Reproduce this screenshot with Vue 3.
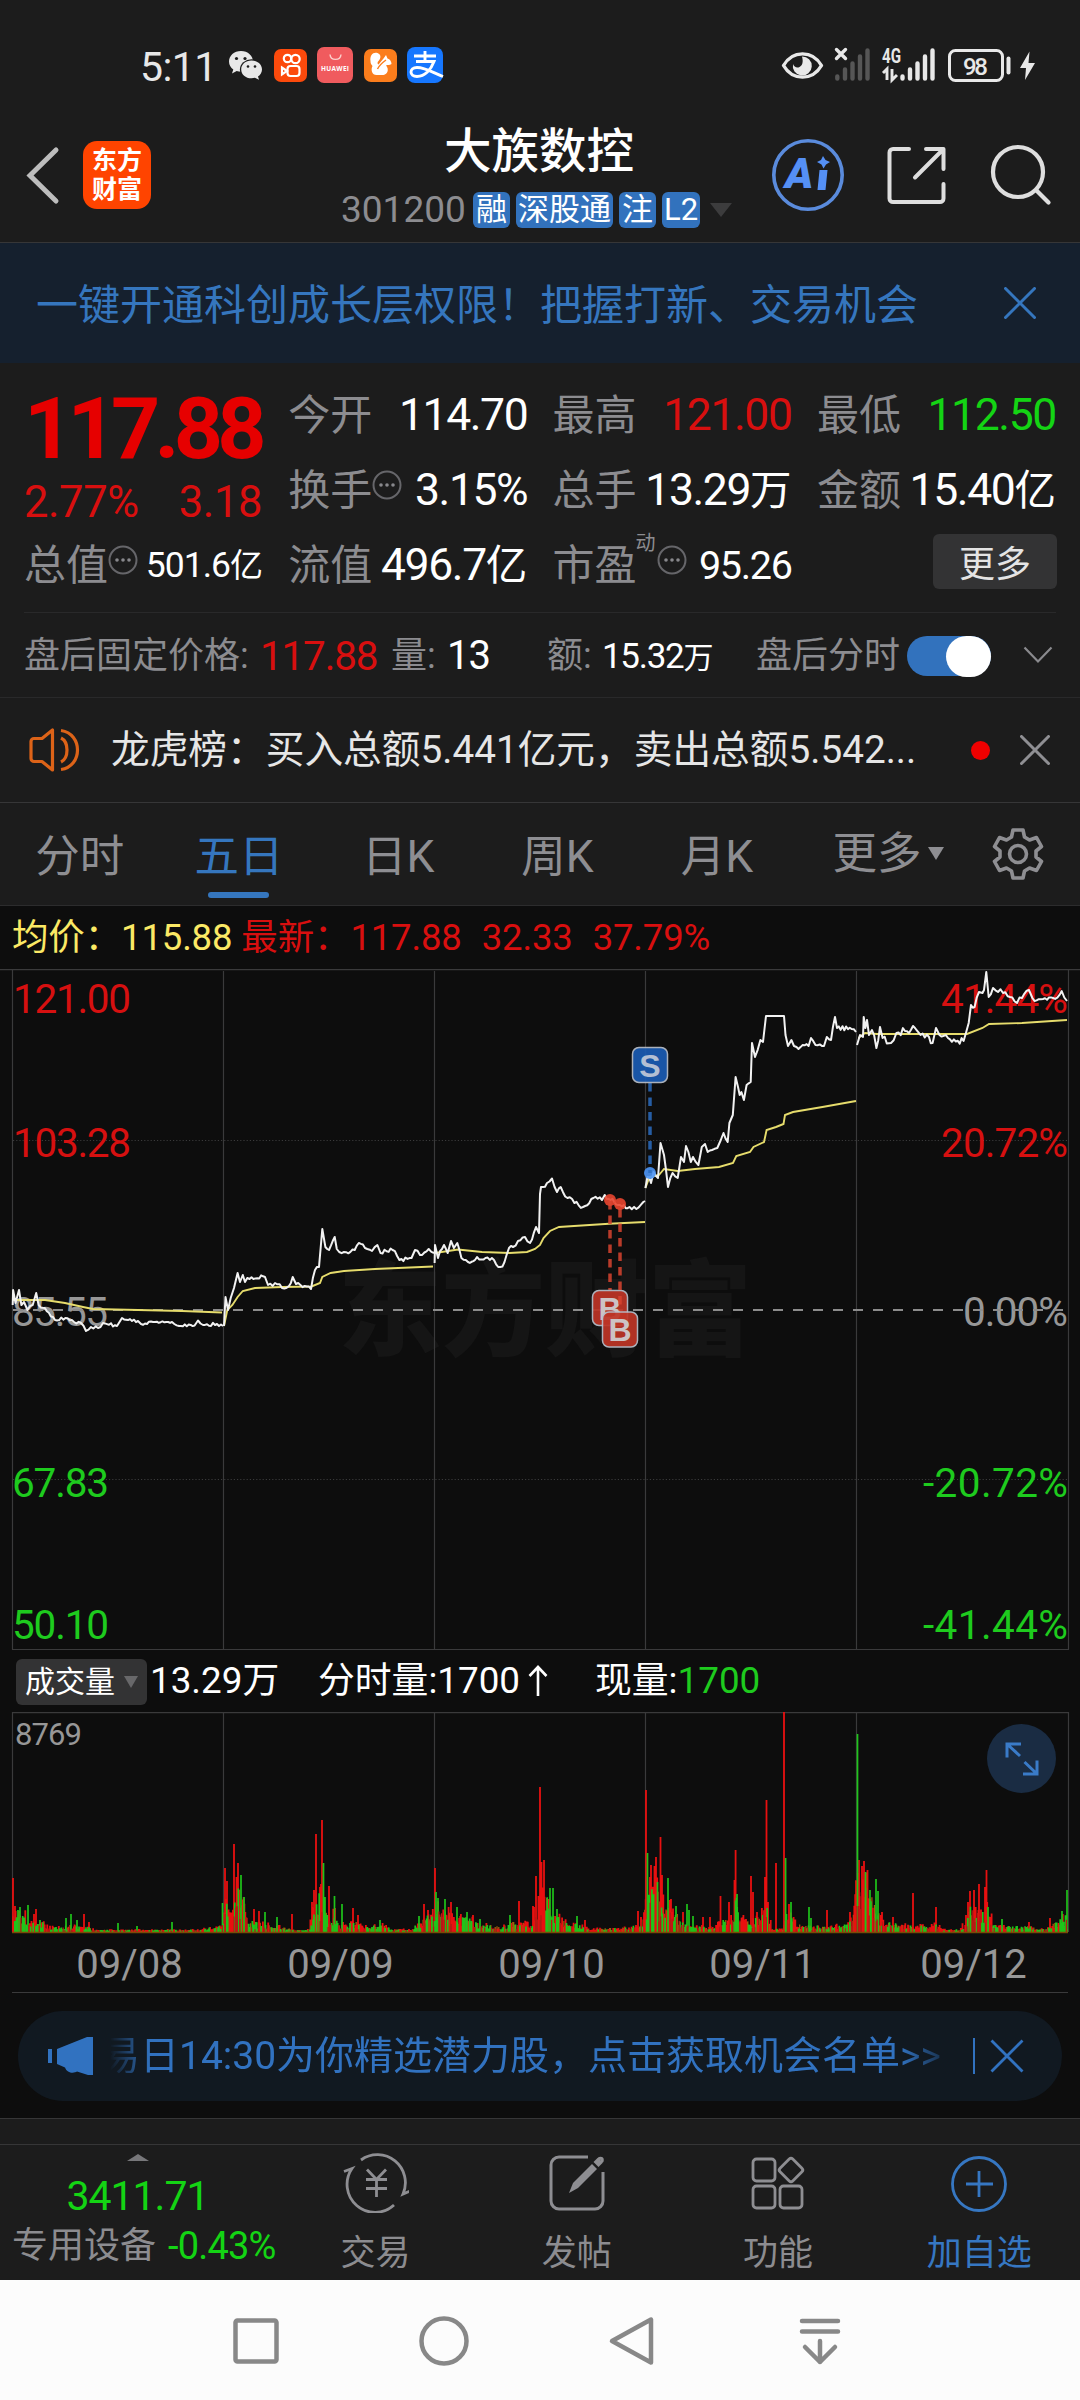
<template>
  <div class="stock-page">
    <!-- Status Bar -->
    <div class="status-bar">
      <div class="status-left">
        <span class="clock">5:11</span>
        <svg class="app-icons" width="215" height="38" viewBox="229 46 215 38">
          <g fill="#e8e8e8">
            <path d="M241 51c-7 0-12 4.700-12 10.500 0 3.300 1.700 6.200 4.300 8l-1.300 4 4.700-2.400c1.300.4 2.800.6 4.300.6 7 0 12-4.700 12-10.200S248 51 241 51z" />
            <ellipse cx="251.500" cy="69.500" rx="11.600" ry="10.200" fill="#1c1c1c" />
            <path d="M251.500 60.500c-6 0-10.300 4-10.300 8.900s4.300 8.900 10.300 8.900c1.200 0 2.400-.2 3.400-.5l4.100 2-1-3.400c2.400-1.600 4-4.100 4-7 0-4.900-4.500-8.900-10.500-8.900z" />
          </g>
          <g fill="#1c1c1c">
            <circle cx="236.500" cy="58.500" r="1.600" /><circle cx="245" cy="58.500" r="1.600" />
            <circle cx="248" cy="66.500" r="1.300" /><circle cx="255" cy="66.500" r="1.300" />
          </g>
          <rect x="274" y="49" width="33" height="33" rx="7" fill="#fc4a0c" />
          <g fill="none" stroke="#fff" stroke-width="2.200">
            <circle cx="287.500" cy="58.500" r="3.700" /><circle cx="295.500" cy="59" r="4.200" />
            <rect x="287.500" y="66" width="12" height="10" rx="3" />
            <path d="M287 71l-5-3.500v7z" />
          </g>
          <rect x="317" y="47" width="36" height="36" rx="7" fill="#f05b5e" />
          <path d="M330 54.500c.5 6.500 10.500 6.500 11 0" fill="none" stroke="#fbd0cc" stroke-width="1.400" />
          <text x="335" y="71" class="huawei" text-anchor="middle" textLength="28">HUAWEI</text>
          <rect x="364" y="49" width="33" height="33" rx="7" fill="#fb7d1c" />
          <path d="M370.500 61c-1-6 3-9.500 7-8 4 1.500 3.500 5.500 1 8-1.500 1.500-1 3 0 3.500l5-6 2.500-3.500 1.500 3.500c2.500.5 4 3 4 5.500-2 1.500-4 .5-5.500 1.500 3.500 4 1.500 9-2.500 9.500h-7c-4.500 0-6-5-4-9-1.500-1.500-2-3-2-5z" fill="#fff" />
          <path d="M377.500 69c2-4 5-6.500 8.500-9M391.500 66v4M388.500 74v3" stroke="#fb7d1c" stroke-width="1.500" fill="none" />
          <rect x="407" y="47" width="36" height="36" rx="8" fill="#1677ff" />
          <path d="M414 56h22M425 51v10M416 61.500h18c-3 8-9 15-17 15-8 0-8-9 0-9 8 0 16 5 26 9" fill="none" stroke="#fff" stroke-width="2.900" />
        </svg>
      </div>
      <svg class="status-right" width="258" height="38" viewBox="780 46 258 38">
        <path d="M783.500 65.500c9-15.500 29-15.500 38 0-9 15.500-29 15.500-38 0z" fill="none" stroke="#e8e8e8" stroke-width="3.400" stroke-linejoin="round" />
        <path d="M802 56.500a9.500 9.500 0 1 1-9 7.500c1 3 4 4.500 6.500 3 3-1.500 4-5 2.500-10.500z" fill="#e8e8e8" />
        <path d="M836.500 49.500l9 9m0-9l-9 9" stroke="#e8e8e8" stroke-width="3.400" stroke-linecap="round" />
        <g stroke="#565656" stroke-width="4.400" stroke-linecap="round">
          <path d="M837.300 76.500v2M845 69.500v9M852.500 63.500v15M860 56.500v22M867.500 50.500v28" />
        </g>
        <text x="882" y="62.500" class="net-type" textLength="19" lengthAdjust="spacingAndGlyphs">4G</text>
        <path d="M883 73l4-4v11M892 69v11l5-5" fill="none" stroke="#e8e8e8" stroke-width="2.900" />
        <g stroke="#e8e8e8" stroke-width="4.400" stroke-linecap="round">
          <path d="M902.500 76.500v2M910 69.500v9M917.500 63.500v15M925 56.500v22M932.500 50.500v28" />
        </g>
        <rect x="949.500" y="50.500" width="53" height="30" rx="6" fill="none" stroke="#e8e8e8" stroke-width="3" />
        <path d="M1008.500 58.500v14" stroke="#e8e8e8" stroke-width="4" stroke-linecap="round" />
        <text x="975.500" y="74.500" class="battery" text-anchor="middle" textLength="25">98</text>
        <path d="M1029.500 51.500l-9.500 16.500h6l-1 12 10-17h-6.500z" fill="#e8e8e8" />
      </svg>
    </div>

    <!-- Header -->
    <header class="header">
      <svg class="back" width="36" height="60" viewBox="0 0 36 60" fill="none" stroke="#bdbdbd" stroke-width="5" stroke-linecap="round">
        <path d="M31 5L5 30.500 31 56" stroke-linejoin="miter" />
      </svg>
      <div class="brand"><span>东方</span><span>财富</span></div>
      <div class="title-block">
        <h1 class="stock-name">大族数控</h1>
        <div class="stock-meta">
          <span class="stock-code">301200</span>
          <span v-for="tag in tags" :key="tag" class="tag">{{ tag }}</span>
          <i class="meta-caret"></i>
        </div>
      </div>
      <svg class="ai" width="74" height="74" viewBox="0 0 74 74">
        <circle cx="37" cy="37" r="34.200" fill="none" stroke="#5a8bdc" stroke-width="3.600" />
        <text x="14" y="50" class="ai-text">A</text>
        <path d="M48.500 32h8l-2 20h-8zM52 18l2.500 4 4.500 2-4 2.500-2.500 4-2-4-4.500-2.500 4-2z" fill="#5590f5" />
      </svg>
      <svg class="share" width="60" height="60" viewBox="0 0 60 60" fill="none" stroke="#dedede" stroke-width="4" stroke-linecap="round" stroke-linejoin="round">
        <path d="M22 3H6a3.500 3.500 0 0 0-3.500 3.500v46A3.500 3.500 0 0 0 6 56h47a3.500 3.500 0 0 0 3.500-3.500V38M39 3h17.500v20M56 3.500L28 31.500" />
      </svg>
      <svg class="search" width="62" height="62" viewBox="0 0 62 62" fill="none" stroke="#dedede" stroke-width="4.200" stroke-linecap="round">
        <circle cx="28" cy="28" r="25" /><path d="M46.500 46.500l12 12" />
      </svg>
    </header>

    <!-- Promo -->
    <div class="promo">
      <span>一键开通科创成长层权限！把握打新、交易机会</span>
      <svg width="32" height="32" viewBox="0 0 32 32" stroke="#3576be" stroke-width="3" stroke-linecap="round"><path d="M1.500 1.500l29 29m0-29l-29 29" /></svg>
    </div>

    <!-- Quote -->
    <section class="quote">
      <div class="price-block">
        <div class="price">117.88</div>
        <div class="change"><span>2.77%</span><span>3.18</span></div>
      </div>
      <div v-for="q in quotes" :key="q.label" class="cell">
        <span class="label">{{ q.label }}<sup v-if="q.sup">{{ q.sup }}</sup></span>
        <svg v-if="q.info" class="info" :class="{ shifted: q.sup }" width="30" height="30" viewBox="0 0 30 30">
          <circle cx="15" cy="15" r="13.500" fill="none" stroke="#66666a" stroke-width="2" />
          <g fill="#88888c"><circle cx="9" cy="15" r="1.800" /><circle cx="15" cy="15" r="1.800" /><circle cx="21" cy="15" r="1.800" /></g>
        </svg>
        <span class="value" :class="[q.tone, q.size]">{{ q.value }}<b v-if="q.unit">{{ q.unit }}</b></span>
      </div>
      <button class="more-btn">更多</button>
    </section>

    <!-- After Hours -->
    <div class="after-hours">
      <span class="ah-price-label">盘后固定价格:</span>
      <span class="ah-price">117.88</span>
      <span class="ah-vol-label">量:</span>
      <span class="ah-vol">13</span>
      <span class="ah-amt-label">额:</span>
      <span class="ah-amt">15.32<b>万</b></span>
      <span class="ah-toggle-label">盘后分时</span>
      <span class="toggle"><i></i></span>
      <svg width="30" height="18" viewBox="0 0 30 18" fill="none" stroke="#8a8a8e" stroke-width="2.200"><path d="M1.500 1.500L15 15.500 28.500 1.500" /></svg>
    </div>

    <!-- News -->
    <div class="news">
      <svg width="52" height="44" viewBox="0 0 52 44" fill="none" stroke="#dd6318" stroke-width="3.200" stroke-linejoin="round">
        <path d="M2 13.500a3 3 0 0 1 3-3h8L23.500 2v40L13 33.500H5a3 3 0 0 1-3-3z" />
        <path d="M32 10c8 4 8 20 0 24M32 2.500c22 3 22 36 0 39" />
      </svg>
      <span class="news-text">龙虎榜：买入总额5.441亿元，卖出总额5.542...</span>
      <i class="dot"></i>
      <svg width="30" height="30" viewBox="0 0 30 30" stroke="#8f8f93" stroke-width="3" stroke-linecap="round"><path d="M1.500 1.500l27 27m0-27l-27 27" /></svg>
    </div>

    <!-- Period Tabs -->
    <nav class="tabs">
      <span v-for="tab in tabs" :key="tab" class="tab" :class="{ active: tab === '五日' }">{{ tab }}</span>
      <span class="tab tab-more">更多<i></i></span>
      <svg class="gear" width="54" height="54" viewBox="0 0 54 54" fill="none" stroke="#8e8e92" stroke-width="3.600" stroke-linejoin="round">
        <path d="M22 3h10l1.500 7 5 3 7-2.500 5 9-5.500 4.500v6l5.500 4.500-5 9-7-2.500-5 3L32 51H22l-1.500-7-5-3-7 2.500-5-9L9 30v-6l-5.500-4.500 5-9 7 2.500 5-3z" />
        <circle cx="27" cy="27" r="8.500" />
      </svg>
    </nav>

    <!-- Chart -->
    <div class="legend">
      <span class="avg">均价：115.88</span>
      <span>最新：117.88</span><span>32.33</span><span>37.79%</span>
    </div>
    <svg class="price-chart" width="1080" height="682" viewBox="0 0 1080 682">
      <text x="338" y="379" class="watermark" textLength="414">东方财富</text>
      <g stroke="#3a3a3b" stroke-width="1.200">
        <path d="M0 .6H1080M12.500 0V680.500M1068.500 0V680.500M12 680.500H1069" />
        <path d="M223.500 2V680M434.500 2V680M645.500 2V680M856.500 2V680" />
        <path d="M13 171.500H1068M13 510.500H1068" stroke-dasharray="1.200 2" />
      </g>
      <text v-for="a in axis" :key="a.text" :x="a.x" :y="a.y" class="axis-text" :class="a.tone" :textLength="a.w">{{ a.text }}</text>
      <path d="M13 341H1068" stroke="#8c8c8c" stroke-width="2" stroke-dasharray="10 10" />
      <polyline v-for="(line, i) in avgLines" :key="'a' + i" :points="toPoints(line)" fill="none" stroke="#e6dc6c" stroke-width="1.900" />
      <polyline v-for="(line, i) in priceLines" :key="'p' + i" :points="jitter(line, i)" fill="none" stroke="#f2f2f2" stroke-width="2" stroke-linejoin="round" />
      <g v-for="(m, i) in marks" :key="'m' + i" :class="m.kind">
        <circle :cx="m.x" :cy="m.dot" r="6" opacity=".9" />
        <path :d="m.line" stroke-width="3.500" stroke-dasharray="8.500 6" fill="none" opacity=".85" />
        <rect :x="m.x - 17.500" :y="m.box" width="35" height="35" rx="6.500" stroke="#b9bfca" stroke-width="1.500" opacity=".92" />
        <text :x="m.x" :y="m.box + 29" text-anchor="middle">{{ m.text }}</text>
      </g>
    </svg>

    <div class="vol-info">
      <span class="vol-pill">成交量<i></i></span>
      <span class="v1">13.29万</span>
      <span class="v2">分时量:1700<svg width="20" height="32" viewBox="0 0 20 32" fill="none" stroke="#fff" stroke-width="2.600"><path d="M10 31V2M1.500 11L10 2l8.500 9" /></svg></span>
      <span class="v3">现量:<em>1700</em></span>
    </div>
    <div class="volume">
      <svg width="1080" height="222" viewBox="0 0 1080 222">
        <path d="M12 .6H1069M12.500 0V220M1068.500 0V220M223.500 0V220M434.500 0V220M645.500 0V220M856.500 0V220" stroke="#3a3a3b" stroke-width="1.200" />
        <path :d="bars.base" stroke="#a35d0c" stroke-width="1.300" />
        <path :d="bars.red" stroke="#e81010" stroke-width="1.800" />
        <path :d="bars.green" stroke="#1fc41a" stroke-width="1.700" />
        <path :d="bars.front" stroke="#b51a14" stroke-width="1.300" />
        <path d="M12 220.500H1068" stroke="#7a4a08" stroke-width="1.500" />
        <text x="15" y="32.500" class="vol-max" textLength="67">8769</text>
      </svg>
      <button class="expand">
        <svg width="34" height="34" viewBox="0 0 34 34" fill="none" stroke="#3a7bc8" stroke-width="3">
          <path d="M2 15.500V2h14M2.500 2.500L15 14M32 18.500V32H18M31.500 31.500L19.500 20" />
        </svg>
      </button>
    </div>
    <div class="dates"><span v-for="d in dates" :key="d">{{ d }}</span></div>

    <!-- Notice -->
    <div class="notice-wrap">
      <div class="notice">
        <svg width="46" height="40" viewBox="0 0 46 40" fill="#3172c0"><path d="M0 13h4v14H0zM9 13L39 1h6v38h-5l-11-3.500c-3 2-10 2-12-4L9 28z" /></svg>
        <span class="notice-text"><span class="notice-scroll">易日14:30为你精选潜力股，点击获取机会名单&gt;&gt;</span></span>
        <i></i>
        <svg width="34" height="34" viewBox="0 0 34 34" stroke="#3172c0" stroke-width="2.800"><path d="M1.500 1.500l31 31m0-31l-31 31" /></svg>
      </div>
    </div>
    <div class="spacer"></div>

    <!-- Bottom Bar -->
    <footer class="bottom-bar">
      <div class="index">
        <i></i>
        <div class="index-value">3411.71</div>
        <div class="index-row"><span>专用设备</span><em>-0.43%</em></div>
      </div>
      <div class="action">
        <svg width="66" height="60" viewBox="0 0 66 60" fill="none" stroke="#8e8e92" stroke-width="2.800">
          <path d="M18 7a28 28 0 0 1 42 34l7-3M51 52A28 28 0 0 1 9 15.500l-8 3" />
          <path d="M24 16.500l9.500 10 9.500-10M33.500 26v18M23 26.500h21M23 35.500h21" />
        </svg>
        <span>交易</span>
      </div>
      <div class="action">
        <svg width="58" height="60" viewBox="0 0 58 60" fill="none" stroke="#8e8e92" stroke-width="3">
          <path d="M40 4H11a8 8 0 0 0-8 8v36a8 8 0 0 0 8 8h36a8 8 0 0 0 8-8V19" />
          <path d="M44 11l5 5-19 19-9 5 4-10z" fill="#8e8e92" stroke="none" />
          <path d="M48 11.500l4-4" stroke-width="7" /><circle cx="52.500" cy="7" r="1.800" />
        </svg>
        <span>发帖</span>
      </div>
      <div class="action">
        <svg width="56" height="60" viewBox="0 0 56 60" fill="none" stroke="#8e8e92" stroke-width="2.800">
          <rect x="3" y="6" width="22" height="22" rx="3.500" /><rect x="3" y="33" width="22" height="22" rx="3.500" />
          <rect x="30" y="33" width="22" height="22" rx="3.500" /><rect x="32" y="8" width="18" height="18" rx="2.500" transform="rotate(45 41 17)" />
        </svg>
        <span>功能</span>
      </div>
      <div class="action follow">
        <svg width="60" height="60" viewBox="0 0 60 60" fill="none" stroke="#3677c2" stroke-width="2.800">
          <circle cx="30" cy="31" r="26.500" /><path d="M30 18v26M17 31h27" />
        </svg>
        <span>加自选</span>
      </div>
    </footer>

    <!-- System Navigation -->
    <div class="system-nav">
      <svg viewBox="0 0 56 56"><rect x="7.500" y="7.500" width="41" height="41" rx="2" /></svg>
      <svg viewBox="0 0 56 56"><circle cx="28" cy="28" r="22.500" /></svg>
      <svg viewBox="0 0 56 56"><path d="M47 6.500v43L8 28z" /></svg>
      <svg viewBox="0 0 56 56" stroke-linecap="round"><path d="M10 8h36M10 18.500h36M28 28v21M13 34l15 15 15-15" /></svg>
    </div>
  </div>
</template>

<script setup>
const tags = ['融', '深股通', '注', 'L2']
const tabs = ['分时', '五日', '日K', '周K', '月K']
const dates = ['09/08', '09/09', '09/10', '09/11', '09/12']

const quotes = [
  { label: '今开', value: '114.70' },
  { label: '最高', value: '121.00', tone: 'up' },
  { label: '最低', value: '112.50', tone: 'down' },
  { label: '换手', value: '3.15%', info: true },
  { label: '总手', value: '13.29', unit: '万' },
  { label: '金额', value: '15.40', unit: '亿' },
  { label: '总值', value: '501.6', unit: '亿', info: true, size: 'small' },
  { label: '流值', value: '496.7', unit: '亿' },
  { label: '市盈', sup: '动', value: '95.26', info: true, size: 'medium' }
]

const axis = [
  { text: '121.00', x: 13, y: 44, w: 118, tone: 'up' },
  { text: '103.28', x: 13, y: 188, w: 118, tone: 'up' },
  { text: '85.55', x: 12, y: 357, w: 96, tone: 'flat' },
  { text: '67.83', x: 12, y: 527.5, w: 97, tone: 'down' },
  { text: '50.10', x: 12, y: 670, w: 97, tone: 'down' },
  { text: '41.44%', x: 941, y: 44, w: 127, tone: 'up' },
  { text: '20.72%', x: 941, y: 188, w: 127, tone: 'up' },
  { text: '0.00%', x: 963, y: 357, w: 105, tone: 'flat' },
  { text: '-20.72%', x: 923, y: 527.5, w: 145, tone: 'down' },
  { text: '-41.44%', x: 923, y: 670, w: 145, tone: 'down' }
]

// One flat x,y list per trading day
const priceLines = [
  [12.7,336, 13.1,321, 15.5,334, 19,321, 21.4,336, 24,333, 27.5,341, 32.7,336, 36.2,324, 38.6,336, 44.8,339, 55,351, 65.4,349, 74,353, 81,354, 86,362, 91,358, 98,359, 103,354, 117,357, 122,349, 138,352, 141,355, 153,353, 172,353, 179,357, 194.6,356.5, 198,351.5, 203,356, 217,355, 223,357],
  [224,357, 225.5,328, 228,341, 230.7,329, 234,319, 237.6,304, 240,313, 242.8,306, 245,313, 249.6,310, 265,308, 268,316, 275,314, 282,319, 289,317, 292.7,308, 296,315, 304.7,317, 311,320, 315,301, 319,298, 322.3,260, 325.4,278, 329,281, 334.7,268, 336.8,280, 344,283, 354.7,281, 358.8,274, 365,279, 372,282, 377.4,276, 380.5,284, 392.6,281, 399.4,291, 411.5,289, 415,281, 420,286, 428.7,280, 434,284],
  [434.6,294, 435,276, 438,289, 444,276, 447.7,284, 451,272, 453.9,279, 457.3,274, 461.4,289, 468,293, 477,288, 485.5,289, 494,291, 500.3,298, 504.5,293, 509,279, 513,278, 518,272, 525,268, 530,274, 536,258, 539,264, 540,225, 541,218, 547,214, 552,209.5, 557,223, 560.7,218, 567.5,229, 574.4,234, 583,238, 593.4,229, 602,231, 604.7,226, 610.6,231, 620,236, 629.5,238, 636.4,240, 643.3,233, 645,232],
  [645.4,219, 647.4,208, 651,214, 653.6,203, 658,209, 660.5,174, 664,186, 668,218, 672.6,204, 677.7,209, 681,188, 684,193, 686,177, 690.8,193, 693,188, 698.4,196, 701.8,178, 705,175, 707.7,183, 712,181, 717.3,179, 720.8,171, 723.5,164, 727.7,173, 729.4,154, 732.8,146, 735.6,108, 738,118, 739.7,126, 741.4,123, 743.9,131, 746.6,116, 750.7,113, 752,74, 755,88, 760.4,71, 763,73, 766,47, 784,47, 785.5,66, 788,77, 791.4,71, 796.5,78, 808.6,77, 811,69, 815.5,76, 824,77, 826.8,68, 831,71, 835,48, 837,59, 851.6,60, 856,63],
  [857,76, 860,66, 863,68, 863.7,48, 865.4,59, 867,51, 869,66, 872,61, 876.4,79, 880,58, 882.6,69, 891,74, 896.4,64, 905,62, 915,59, 920.5,66, 929,68, 932.6,74, 936,59, 939.5,66, 948,69, 963.6,72, 968.7,54, 971,36, 974.6,38, 979,23, 982.5,24, 984,21, 986.3,3, 988.7,28, 993,19, 998,23, 1003,24, 1010,28, 1017,34, 1022,29, 1029,21, 1032.4,29, 1043,30, 1053,29, 1061.7,22, 1067,32]
]

const avgLines = [
  [13,331, 45,331, 65,334, 83,338, 93,340, 138,341, 182,342, 222,343.5],
  [224,357, 227.3,341, 232.4,336, 237.6,328, 242.8,322, 255,319, 282,318, 311.6,317.5, 320,314, 322.3,308, 330.6,304, 344,302, 375,300, 433,297.5],
  [435,284, 458,280.5, 482,283, 509.6,284, 527,283, 535,280, 540,276, 543.5,269, 550,262, 559,258, 574,257, 609,254.7, 645,253],
  [645.4,219, 649.5,208, 659,206, 664,200, 677.7,202, 695,200, 719,198, 733,194, 736.3,187, 750,183, 753.5,178, 764,173, 766.6,161, 776,158, 783.5,155, 785,146, 793,143, 822.4,138, 856,132],
  [858.5,69, 865,64, 877,65, 967,65, 982.5,59, 989,55, 1022,54, 1067,51]
]

const marks = [
  { kind: 'buy', text: 'B', x: 610, dot: 231, box: 321.5, line: 'M610 232V321' },
  { kind: 'buy', text: 'B', x: 620, dot: 235, box: 343, line: 'M620 240V342' },
  { kind: 'sell', text: 'S', x: 650, dot: 204, box: 78.5, line: 'M650 114V204' }
]

const toPairs = (flat) => {
  const out = []
  for (let i = 0; i < flat.length; i += 2) out.push([flat[i], flat[i + 1]])
  return out
}
const toPoints = (flat) => toPairs(flat).map((p) => p.join(',')).join(' ')

const makeRandom = (seed) => () => {
  seed = (seed * 16807) % 2147483647
  return seed / 2147483647
}

// Minute-level wiggle between the key prices
const jitter = (flat, day) => {
  const rnd = makeRandom(91 + day * 17)
  const pts = toPairs(flat)
  const out = [pts[0]]
  for (let i = 1; i < pts.length; i++) {
    const [x0, y0] = pts[i - 1]
    const [x1, y1] = pts[i]
    const steps = Math.floor((x1 - x0) / 1.8)
    const limitUp = y0 === 47 && y1 === 47
    const amp = day === 0 ? 3 : day === 4 ? 7 : 5
    for (let s = 1; s < steps; s++) {
      const t = s / steps
      out.push([x0 + (x1 - x0) * t, y0 + (y1 - y0) * t + (limitUp ? 0 : (rnd() - 0.5) * amp)])
    }
    out.push(pts[i])
  }
  return out.map(([x, y]) => `${x.toFixed(1)},${y.toFixed(1)}`).join(' ')
}

// x, height of the usual minute volume
const envelope = toPairs([
  12,20, 24,22, 30,9, 38,14, 48,6, 70,7, 90,5, 95,2.5, 200,2.5, 214,6, 222,8, 226,34, 231,18, 237,50, 243,36, 250,13, 262,9, 280,6, 296,2.5, 309,3, 313,28, 322,48, 327,18, 334,20, 340,9,
  358,11, 366,6, 376,7, 386,8, 390,3, 410,3, 418,10, 426,20, 430,16, 438,30, 446,22, 456,18, 470,15, 482,8, 498,7, 501,4, 510,11, 530,9, 540,40, 545,45, 550,28, 560,15, 575,9, 588,5,
  600,4, 630,5, 638,9, 644,18, 648,50, 657,46, 662,32, 672,26, 685,14, 692,6, 715,6, 722,14, 730,16, 736,40, 741,14, 760,16, 765,36, 769,16, 773,3, 783,4, 787,26, 792,18, 798,9, 815,7,
  828,6, 845,8, 852,14, 858,60, 866,55, 875,28, 884,12, 900,9, 915,6, 930,8, 938,9, 942,3, 960,3, 965,12, 972,34, 980,24, 988,26, 994,8, 1010,6, 1028,7, 1040,3, 1048,4, 1060,16, 1067,18
])

const redSpikes = toPairs([
  13,54, 15,26, 36,23, 34,18, 84,18, 89,10, 225,64, 227,51, 234,88, 238,69, 236.5,55, 254,23, 259,21, 292,18, 312,30, 314,42, 316,98, 320,45, 322,112, 329,46, 335,24, 353,24, 358,17,
  424,28, 428,22, 435,64, 451,30, 473,17, 519,31, 533,26, 536,56, 540,145, 541.5,70, 544,72, 547,34, 585,12, 638,21, 641,15, 646,142, 650,55, 651,67, 656,75, 654.5,66, 660.5,95, 662,57,
  671,33, 683,20, 703,15, 710,15, 720.5,36, 729,30, 735.6,82, 734.5,52, 751,56, 753,40, 757,20, 765,55, 766.5,132, 768,30, 776,69, 784,220, 789,28, 827,22, 850,20, 859,72, 864,71, 862,66,
  867.5,62, 882,20, 893,15, 913,39, 936,25, 968,30, 970,41, 974,42, 979,48, 986.5,62, 985,45, 1029,10, 1050,14
])
const greenSpikes = toPairs([
  20,25, 18,22, 28,27, 40,12, 66,14, 71,18, 77,12, 118,9, 137,6, 172,10, 222.5,29, 241,57, 244,35, 265,20, 277,15, 323.5,69, 325,35, 334.5,36, 342,28, 380,12, 419,16, 436,40, 438,34, 445,33,
  457,25, 467,20, 480,13, 510,17, 550,44, 553,44, 557,23, 577,16, 647.5,79, 657.5,50, 668,54, 676,26, 687,28, 689,22, 693,16, 737,38, 785.6,74, 791,30, 809,25, 811,14, 857.5,198, 865.5,60,
  870,42, 876,53, 878,41, 988,25, 1002,13, 1062,21, 1067,42
])

const heightAt = (x) => {
  const i = envelope.findIndex((p) => p[0] >= x)
  if (i <= 0) return 4
  const [x0, h0] = envelope[i - 1]
  const [x1, h1] = envelope[i]
  return h0 + ((h1 - h0) * (x - x0)) / (x1 - x0)
}

const bar = (x, h) => `M${x.toFixed(1)} 220V${(220 - h).toFixed(1)}`

const buildBars = () => {
  const rnd = makeRandom(4217)
  const out = { base: '', red: '', green: '', front: '' }
  for (let x = 13; x < 1068; x += 0.88) {
    const h = heightAt(x)
    const r = rnd()
    const v = Math.max(2, h * (0.4 + rnd() * 0.8))
    if (r < 0.2) out.base += bar(x, v * 0.8)
    else if (r < 0.53) out.red += bar(x, v)
    else if (r < 0.83) out.green += bar(x, v * 0.8)
    else out.front += bar(x, v * 0.6)
  }
  redSpikes.forEach(([x, h]) => { out.red += bar(x, h) })
  greenSpikes.forEach(([x, h]) => { out.green += bar(x, h) })
  return out
}
const bars = buildBars()
</script>

<style>
body {
  margin: 0;
  background: #1c1c1c;
}
</style>

<style scoped>
.stock-page {
  width: 1080px;
  height: 2400px;
  overflow: hidden;
  background: #1c1c1c;
  color: #fff;
  font-family: Roboto, 'Noto Sans CJK SC', sans-serif;
  line-height: 1;
}

.stock-page * {
  box-sizing: border-box;
}

svg {
  display: block;
  flex-shrink: 0;
}

span,
div {
  white-space: nowrap;
}

b,
em,
i {
  font-weight: 400;
  font-style: normal;
}

button {
  border: 0;
  padding: 0;
  font-family: inherit;
}

.up { color: #d80f0f; }
.down { color: #14d414; }

/* Status Bar */
.status-bar {
  height: 96px;
  padding: 34px 42px 0 140px;
  display: flex;
  justify-content: space-between;
}

.status-left {
  display: flex;
  height: 62px;
}

.status-left .app-icons {
  margin-top: 12px;
}

.clock {
  width: 89px;
  font-size: 41px;
  line-height: 67px;
  color: #e8e8e8;
  letter-spacing: -.600px;
}

.status-right {
  margin-top: 12px;
}

.huawei {
  font: 700 6.5px 'Open Sans', sans-serif;
  fill: #fff;
}

.net-type {
  font: 700 20px Roboto, sans-serif;
  fill: #e8e8e8;
}

.battery {
  font: 500 24px Roboto, sans-serif;
  fill: #e8e8e8;
}

/* Header */
.header {
  height: 147px;
  border-bottom: 1px solid #363637;
  display: flex;
  align-items: flex-start;
}

.back {
  margin: 49px 0 0 25px;
}

.brand {
  margin: 45px 0 0 22px;
  width: 68px;
  height: 68px;
  border-radius: 14px;
  background: #ff4400;
  display: flex;
  flex-direction: column;
  align-items: center;
  justify-content: center;
  gap: 4px;
  font-size: 25px;
  font-weight: 700;
}

.title-block {
  margin-left: 190px;
  width: 395px;
}

.stock-name {
  margin: 31px 0 0 103px;
  font-size: 47.500px;
  font-weight: 500;
  line-height: 50px;
}

.stock-meta {
  margin-top: 14px;
  height: 37px;
  display: flex;
  align-items: center;
}

.stock-code {
  width: 132px;
  font-size: 37px;
  color: #8c8c90;
}

.tag {
  margin-right: 6px;
  padding: 0 2px;
  min-width: 37px;
  text-align: center;
  height: 36px;
  line-height: 35px;
  border-radius: 6px;
  background: #3272bd;
  font-size: 31px;
}

.meta-caret {
  margin: 0 0 0 4px;
  border: 11px solid transparent;
  border-top: 14px solid #3c3c3d;
  border-bottom: 0;
}

.ai { margin: 42px 0 0 35px; }
.ai-text {
  font: italic 900 43px Roboto, sans-serif;
  fill: #5590f5;
}
.share { margin: 50px 0 0 42px; }
.search { margin: 48px 0 0 43px; }

/* Promo */
.promo {
  height: 120px;
  padding: 0 44px 0 36px;
  background: #15202e;
  color: #3576be;
  display: flex;
  align-items: center;
  justify-content: space-between;
  font-size: 42px;
}

.promo span { margin-top: 5px; }

/* Quote */
.quote {
  height: 249px;
  padding: 15px 25px 0 24px;
  display: grid;
  grid-template-columns: repeat(4, 238px);
  grid-template-rows: repeat(3, 75px);
  column-gap: 26.300px;
}

.price-block {
  grid-row: span 2;
  color: #e60000;
}

.price {
  height: 101px;
  line-height: 101px;
  font-size: 86px;
  font-weight: 700;
  letter-spacing: -5.800px;
}

.change {
  display: flex;
  justify-content: space-between;
  height: 48px;
  line-height: 47px;
  font-size: 43.500px;
  letter-spacing: -.400px;
  color: #d80f0f;
}

.cell {
  display: flex;
  align-items: center;
}

.label {
  position: relative;
  font-size: 42px;
  color: #8c8c90;
}

.label sup {
  position: absolute;
  left: 83px;
  top: -12px;
  font-size: 20px;
}

.info {
  margin: -12px 0 0 0;
}

.info.shifted { margin-left: 20px; }

.value {
  margin-left: auto;
  margin-right: -1px;
  font-size: 44.500px;
  letter-spacing: -1.400px;
}

.value b {
  font-size: 41.500px;
  letter-spacing: 0;
}

.value.small {
  font-size: 35.500px;
  letter-spacing: -1px;
}

.value.small b { font-size: 33px; }
.value.medium { font-size: 39.500px; letter-spacing: -1.300px; }

.more-btn {
  grid-column: 4;
  grid-row: 3;
  justify-self: end;
  width: 124px;
  height: 55px;
  margin-top: 6px;
  margin-right: -2px;
  padding-bottom: 2px;
  border-radius: 6px;
  background: #333334;
  color: #e4e4e4;
  font-size: 36px;
}

/* After Hours */
.after-hours {
  margin: 0 24px;
  height: 85px;
  border-top: 1px solid #29292a;
  display: flex;
  align-items: center;
  color: #8c8c90;
  font-size: 36px;
}

.after-hours > span { position: relative; top: 1px; }
.ah-price-label { width: 236px; }
.ah-price { width: 131px; font-size: 40.500px; letter-spacing: -1.200px; color: #d80f0f; }
.ah-vol-label { width: 56px; }
.ah-vol { width: 100px; font-size: 40px; letter-spacing: -1px; color: #fff; }
.ah-amt-label { width: 55px; }
.ah-amt { width: 154px; font-size: 35px; letter-spacing: -1.300px; color: #fff; }
.ah-amt b { font-size: 30px; }
.ah-toggle-label { width: 151px; }

.toggle {
  width: 84px;
  height: 40px;
  border-radius: 20px;
  background: #3272bd;
  display: flex;
  justify-content: flex-end;
  margin-right: 32px;
}

.toggle i {
  width: 45px;
  height: 41px;
  border-radius: 21px;
  background: #fff;
}

/* News */
.news {
  height: 105px;
  padding: 0 30px 0 29px;
  border-top: 1px solid #29292a;
  display: flex;
  align-items: center;
}

.news-text {
  margin-left: 30px;
  width: 861px;
  font-size: 38.700px;
  color: #e6e6e6;
}

.news .dot {
  width: 19px;
  height: 19px;
  border-radius: 50%;
  background: #f00000;
  margin-right: 30px;
}

/* Period Tabs */
.tabs {
  height: 104px;
  border-top: 1px solid #363637;
  border-bottom: 1px solid #2c2c2d;
  display: flex;
  align-items: center;
  color: #8e8e92;
  font-size: 44.500px;
}

.tab {
  width: 159.300px;
  height: 102px;
  line-height: 109px;
  text-align: center;
}

.tab.active {
  color: #3576be;
  display: flex;
  flex-direction: column;
  align-items: center;
}

.tab.active::after {
  content: '';
  width: 61px;
  height: 6px;
  border-radius: 3px;
  background: #3576be;
  margin-top: -20px;
}

.tab-more {
  display: flex;
  align-items: center;
  justify-content: center;
  margin-left: 8px;
  width: 168px;
}

.tab-more i {
  margin: -2px 0 0 7px;
  border: 8px solid transparent;
  border-top: 13px solid #8e8e92;
  border-bottom: 0;
}

.gear { margin-left: 19px; }

/* Chart */
.legend {
  height: 63px;
  background: #0d0d0d;
  padding: 1px 12px 0;
  display: flex;
  align-items: center;
  font-size: 36.500px;
  letter-spacing: -.150px;
  color: #d80f0f;
}

.legend span { margin-right: 20px; }
.legend .avg { color: #fbe965; margin-right: 9px; }

.price-chart { background: #0d0d0d; }

.watermark {
  font: 900 104px 'Noto Sans CJK SC', sans-serif;
  fill: #151515;
}

.axis-text {
  font-size: 40.5px;
}

.axis-text.up { fill: #d61010; }
.axis-text.down { fill: #1ecb1e; }
.axis-text.flat { fill: #979797; }

.buy circle { fill: #e8452f; }
.buy path { stroke: #d84430; }
.buy rect { fill: #be3526; }
.sell circle { fill: #4d95f5; }
.sell path { stroke: #2c6cc0; }
.sell rect { fill: #1b5cb3; }
.buy text,
.sell text {
  font: 700 32px 'Liberation Sans', sans-serif;
  fill: #ccc3c4;
}

.sell text { fill: #b3bfd3; }

.vol-info {
  height: 61px;
  background: #0d0d0d;
  padding: 0 0 0 16px;
  display: flex;
  align-items: center;
  font-size: 36.800px;
}

.vol-pill {
  width: 131px;
  height: 46px;
  margin-right: 3px;
  border-radius: 6px;
  background: #333334;
  display: flex;
  align-items: center;
  padding-left: 9px;
  font-size: 30px;
}

.vol-pill i {
  margin-left: 9px;
  border: 7px solid transparent;
  border-top: 12px solid #68686a;
  border-bottom: 0;
}

.v1 { width: 168px; }
.v2 { width: 277px; display: flex; align-items: center; gap: 8px; }
.v3 em { color: #1ecb1e; }

.volume {
  position: relative;
  height: 221px;
  background: #0d0d0d;
}

.vol-max {
  font-size: 31px;
  fill: #979797;
}

.expand {
  position: absolute;
  right: 24px;
  top: 12px;
  width: 69px;
  height: 69px;
  border-radius: 50%;
  background: #1a2c43;
  display: flex;
  align-items: center;
  justify-content: center;
}

.dates {
  height: 60px;
  padding: 0 12px;
  background: linear-gradient(#3a3a3b, #3a3a3b) 12px 59px / 1056px 1px no-repeat #0d0d0d;
  display: flex;
  color: #979797;
  font-size: 40px;
}

.dates span {
  width: 211px;
  padding-left: 24px;
  line-height: 64px;
  text-align: center;
}

/* Notice */
.notice-wrap {
  height: 125px;
  padding: 18px 18px 0;
  background: #0d0d0d;
}

.notice {
  height: 90px;
  border-radius: 45px;
  background: #111921;
  padding: 0 0 0 30px;
  display: flex;
  align-items: center;
  color: #3172c0;
  font-size: 39px;
}

.notice-text {
  margin-left: 16px;
  width: 834px;
  height: 60px;
  line-height: 60px;
  overflow: hidden;
  display: flex;
  -webkit-mask-image: linear-gradient(90deg, transparent, #000 40px, #000 790px, transparent 850px);
  mask-image: linear-gradient(90deg, transparent, #000 40px, #000 790px, transparent 850px);
}

.notice-scroll { margin-left: -9px; }

.notice i {
  width: 1.500px;
  height: 36px;
  background: #3172c0;
  margin: 0 15px 0 29px;
}

.spacer {
  height: 26px;
  border-top: 1px solid #363637;
}

/* Bottom Bar */
.bottom-bar {
  height: 136px;
  border-top: 1px solid #363637;
  display: flex;
}

.index {
  width: 275px;
  display: flex;
  flex-direction: column;
  align-items: center;
}

.index > i {
  margin-top: 9px;
  border: 11px solid transparent;
  border-bottom: 7px solid #77777a;
  border-top: 0;
}

.index-value {
  margin-top: 15px;
  font-size: 41px;
  letter-spacing: -1px;
  color: #14d414;
}

.index-row {
  margin-top: 11px;
  width: 100%;
  height: 36px;
  display: flex;
  align-items: center;
  padding-left: 12px;
  font-size: 36px;
  color: #8c8c90;
}

.index-row em {
  margin-left: 12px;
  font-size: 38px;
  letter-spacing: -.800px;
  color: #14d414;
}

.action {
  width: 201.250px;
  display: flex;
  flex-direction: column;
  align-items: center;
  padding-top: 8px;
  color: #8c8c90;
  font-size: 35px;
}

.action span { margin-top: 23px; }
.action.follow { color: #3677c2; }

/* System Navigation */
.system-nav {
  height: 121px;
  padding-left: 162px;
  background: #fcfcfc;
  display: flex;
  align-items: center;
}

.system-nav svg {
  width: 56px;
  height: 56px;
  margin: 0 66px;
  fill: none;
  stroke: #888;
  stroke-width: 4.500;
  stroke-linejoin: round;
}
</style>
